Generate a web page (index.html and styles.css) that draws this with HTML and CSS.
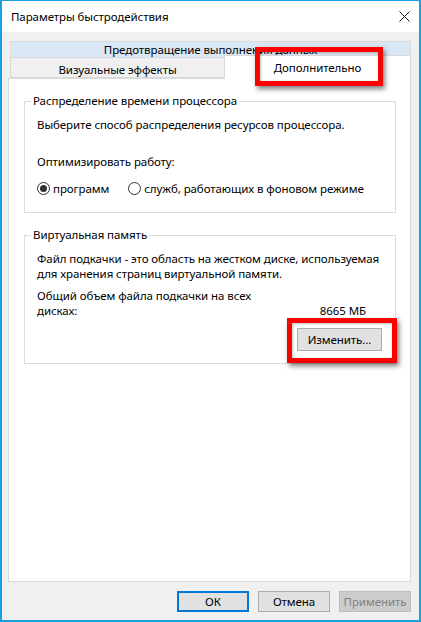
FILE: index.html
```html
<!DOCTYPE html>
<html>
<head>
    <title>Параметры быстродействия</title>
    <link rel="stylesheet" href="styles.css">
</head>
<body>
    <div class="window">
        <div class="titlebar">
            <span class="title">Параметры быстродействия</span>
            <svg class="close" width="11" height="11" viewBox="0 0 11 11">
                <path d="M0.5 0.5 L10.5 10.5 M10.5 0.5 L0.5 10.5" stroke="#111" stroke-width="1" fill="none"/>
            </svg>
        </div>

        <div class="body">
            <div class="tabs">
                <div class="tab-row tab-row-back">
                    <div class="tab tab-wide">Предотвращение выполнения данных</div>
                </div>
                <div class="tab-row">
                    <div class="tab tab-left">Визуальные эффекты</div>
                    <div class="tab tab-active">Дополнительно</div>
                </div>
            </div>

            <div class="panel">
                <fieldset class="group">
                    <legend>Распределение времени процессора</legend>
                    <p class="first">Выберите способ распределения ресурсов процессора.</p>
                    <p class="optimize">Оптимизировать работу:</p>
                    <div class="radios">
                        <label class="radio"><span class="dot checked"></span>программ</label>
                        <label class="radio"><span class="dot"></span>служб, работающих в фоновом режиме</label>
                    </div>
                </fieldset>

                <fieldset class="group group-memory">
                    <legend>Виртуальная память</legend>
                    <p class="first">Файл подкачки - это область на жестком диске, используемая для хранения страниц виртуальной памяти.</p>
                    <div class="total">
                        <span class="total-label">Общий объем файла подкачки на всех дисках:</span>
                        <span class="total-value">8665 МБ</span>
                    </div>
                    <div class="group-actions">
                        <button class="btn btn-change">Изменить...</button>
                    </div>
                </fieldset>
            </div>

            <div class="footer">
                <button class="btn btn-default">ОК</button>
                <button class="btn">Отмена</button>
                <button class="btn" disabled>Применить</button>
            </div>
        </div>

        <!-- red marks drawn over the dialog -->
        <div class="highlight highlight-tab"></div>
        <div class="highlight highlight-change"></div>
    </div>
</body>
</html>
```

FILE: styles.css
```css
* {
    box-sizing: border-box;
}
body {
    margin: 0;
    font-family: "Noto Sans", sans-serif;
    font-size: 11.5px;
    letter-spacing: -0.08px;
    color: #000;
    background-color: #fff;
}
.window {
    position: relative;
    width: 421px;
    height: 622px;
    display: flex;
    flex-direction: column;
    background-color: #f0f0f0;
    border: 2px solid #1a9fe0;
    border-top-width: 1px;
}
.titlebar {
    height: 31px;
    flex-shrink: 0;
    display: flex;
    align-items: center;
    justify-content: space-between;
    padding: 0 9px 0 9px;
    background-color: #fff;
}
.title {
    font-size: 11.5px;
}
.close {
    display: block;
}
.body {
    flex: 1;
    display: flex;
    flex-direction: column;
    padding: 9px 8px 8px 6px;
}
.tabs {
    margin-left: 2px;
}
.tab-row {
    display: flex;
}
.tab {
    text-align: center;
    border: 1px solid #d9d9d9;
}
.tab-wide {
    flex: 1;
    height: 16px;
    line-height: 15px;
    border-bottom: none;
    background-color: #dae7f6;
}
.tab-left {
    width: 214px;
    height: 21px;
    line-height: 21px;
    padding-top: 1px;
    background-color: #f0f0f0;
    border-right: none;
}
.tab-active {
    flex: 1;
    position: relative;
    z-index: 1;
    height: 24px;
    margin-top: -2px;
    margin-bottom: -1px;
    line-height: 21px;
    padding-top: 1px;
    border-bottom: none;
    background-color: #fff;
}
.panel {
    flex: 1;
    padding: 14px 14px 0 15px;
    background-color: #fff;
    border: 1px solid #d9d9d9;
}
.group {
    margin: 0;
    padding: 0 12px 16px 12px;
    min-width: 0;
    border: 1px solid #dcdcdc;
}
.group legend {
    margin-left: -6px;
    padding: 0 2px;
    line-height: 16px;
}
.group p {
    margin: 0;
    line-height: 15px;
}
.group p.first {
    margin-top: 8px;
}
.optimize {
    margin-top: 22px !important;
}
.radios {
    display: flex;
    gap: 19px;
    margin-top: 12px;
    line-height: 15px;
}
.radio {
    display: flex;
    align-items: center;
    gap: 3px;
}
.dot {
    width: 13px;
    height: 13px;
    border: 1px solid #333;
    border-radius: 50%;
    background-color: #fff;
    display: flex;
    align-items: center;
    justify-content: center;
}
.dot.checked::after {
    content: "";
    width: 7px;
    height: 7px;
    border-radius: 50%;
    background-color: #333;
}
.group-memory {
    margin-top: 14px;
    padding-bottom: 12px;
}
.total {
    display: flex;
    justify-content: space-between;
    align-items: flex-end;
    margin-top: 7px;
    line-height: 15px;
}
.total-label {
    width: 222px;
}
.total-value {
    margin-right: 17px;
}
.group-actions {
    display: flex;
    justify-content: flex-end;
    margin-top: 10px;
    margin-right: 1px;
}
.btn {
    font-family: "Noto Sans", sans-serif;
    font-size: 11.5px;
    letter-spacing: -0.08px;
    color: #000;
    width: 72px;
    height: 21px;
    padding: 0;
    background-color: #e1e1e1;
    border: 1px solid #adadad;
}
.btn-change {
    width: 85px;
    height: 23px;
}
.btn-default {
    border: 2px solid #0078d7;
}
.btn:disabled {
    color: #838383;
    background-color: #cccccc;
    border-color: #bfbfbf;
}
.footer {
    display: flex;
    justify-content: flex-end;
    gap: 9px;
    padding-top: 9px;
}
.highlight {
    position: absolute;
    border: 5px solid #ff0000;
    box-shadow: 2px 3px 5px rgba(0,0,0,0.5), inset 1px 1px 3px rgba(0,0,0,0.25);
    z-index: 2;
}
.highlight-tab {
    left: 253px;
    top: 46px;
    width: 128px;
    height: 39px;
}
.highlight-change {
    left: 285px;
    top: 317px;
    width: 110px;
    height: 45px;
}
```
